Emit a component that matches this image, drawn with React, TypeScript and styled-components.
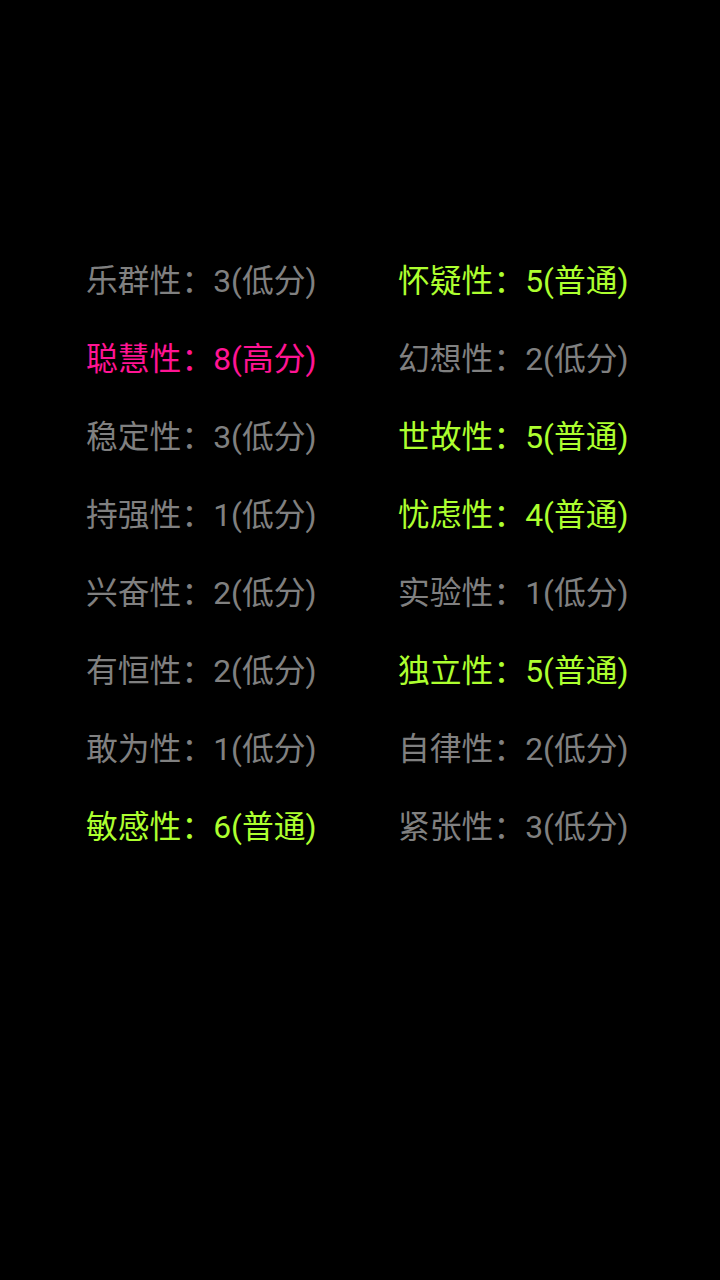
import React from "react";
import styled, { createGlobalStyle } from "styled-components";

const Global = createGlobalStyle`
  html, body { margin: 0; padding: 0; background: #000; }
  #root { min-height: 1280px; background: #000; }
`;

const Page = styled.div`
  width: 720px;
  height: 1280px;
  background: #000;
  box-sizing: border-box;
  padding: 242px 0 0 86px;
`;

const Grid = styled.div`
  display: grid;
  grid-template-columns: 312px 312px;
  grid-auto-rows: 78px;
`;

type Level = "low" | "mid" | "high";

const colors: Record<Level, string> = {
  low: "#808080",
  mid: "#adff2f",
  high: "#ff1493",
};

const Item = styled.div<{ $level: Level }>`
  font-family: Roboto, "Noto Sans CJK SC", sans-serif;
  font-size: 31.8px;
  line-height: 78px;
  white-space: nowrap;
  color: ${(p) => colors[p.$level]};
`;

const data: [string, number, Level][] = [
  ["乐群性", 3, "low"],
  ["怀疑性", 5, "mid"],
  ["聪慧性", 8, "high"],
  ["幻想性", 2, "low"],
  ["稳定性", 3, "low"],
  ["世故性", 5, "mid"],
  ["持强性", 1, "low"],
  ["忧虑性", 4, "mid"],
  ["兴奋性", 2, "low"],
  ["实验性", 1, "low"],
  ["有恒性", 2, "low"],
  ["独立性", 5, "mid"],
  ["敢为性", 1, "low"],
  ["自律性", 2, "low"],
  ["敏感性", 6, "mid"],
  ["紧张性", 3, "low"],
];

const label: Record<Level, string> = { low: "低分", mid: "普通", high: "高分" };

export default function App() {
  return (
    <>
      <Global />
      <Page>
        <Grid>
          {data.map(([name, score, level]) => (
            <Item key={name} $level={level}>
              {name}：{score}({label[level]})
            </Item>
          ))}
        </Grid>
      </Page>
    </>
  );
}
